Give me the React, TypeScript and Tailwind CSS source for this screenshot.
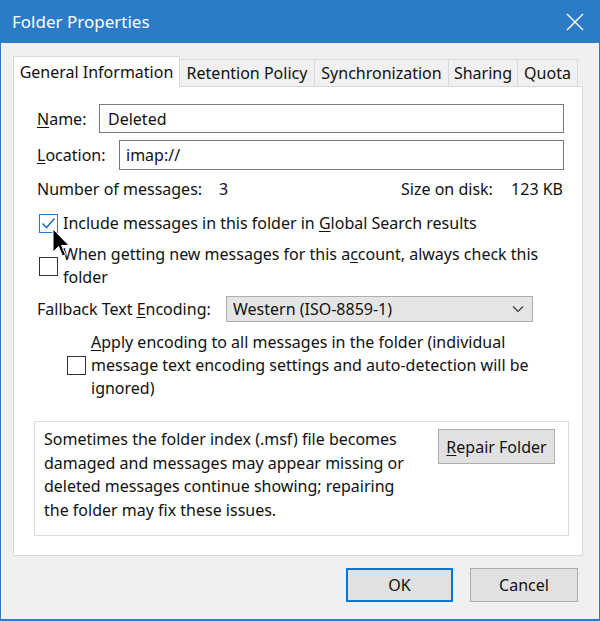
import React from "react";

function U({ children }: { children: React.ReactNode }) {
  return <span className="underline underline-offset-2">{children}</span>;
}

function Check({ checked }: { checked?: boolean }) {
  return (
    <div
      className={
        "w-[19px] h-[19px] shrink-0 border bg-white flex items-center justify-center " +
        (checked ? "border-[#2b7bc6]" : "border-[#333333]")
      }
    >
      {checked && (
        <svg width="15" height="13" viewBox="0 0 15 13">
          <path d="M1.5 6.5 L5.5 10.5 L13.5 1.5" fill="none" stroke="#2b6fb6" strokeWidth="1.6" />
        </svg>
      )}
    </div>
  );
}

const tabs = [
  { label: "Retention Policy", w: "w-[135px]" },
  { label: "Synchronization", w: "w-[134px]" },
  { label: "Sharing", w: "w-[69px]" },
  { label: "Quota", w: "w-[60px]" },
];

export default function App() {
  return (
    <div
      className="w-[600px] h-[621px] bg-[#2b7bc6] flex flex-col text-[16px] text-[#111111]"
      style={{ fontFamily: '"Noto Sans", "Open Sans", sans-serif' }}
    >
      {/* Title bar */}
      <div className="h-[43px] flex items-center justify-between pl-[12px] pr-[16px] text-white">
        <span className="text-[17px]">Folder Properties</span>
        <svg width="18" height="18" viewBox="0 0 18 18">
          <path d="M1 1 L17 17 M17 1 L1 17" stroke="white" strokeWidth="1.4" />
        </svg>
      </div>

      <div className="flex-1 mx-px mb-[2px] bg-[#f0f0f0] pl-[12px] pt-[13px] relative">
        {/* Tabs */}
        <div className="flex items-end h-[30px]">
          <div className="w-[167px] h-[31px] bg-white border border-b-0 border-[#d9d9d9] flex items-center justify-center relative z-10 -mb-px">
            General Information
          </div>
          {tabs.map((t) => (
            <div
              key={t.label}
              className={t.w + " h-[27px] border border-l-0 border-b-0 border-[#d9d9d9] flex items-center justify-center"}
            >
              {t.label}
            </div>
          ))}
        </div>

        {/* Panel */}
        <div className="w-[570px] h-[470px] bg-white border border-[#d9d9d9] pl-[23px] pr-[18px] pt-[17px] relative">
          <div className="flex items-center h-[29px]">
            <span className="w-[62px]">
              <U>N</U>ame:
            </span>
            <div className="flex-1 h-[29px] border border-[#7a7a7a] flex items-center pl-[8px]">Deleted</div>
          </div>
          <div className="flex items-center h-[30px] mt-[7px]">
            <span className="w-[82px]">
              <U>L</U>ocation:
            </span>
            <div className="flex-1 h-[30px] border border-[#7a7a7a] flex items-center pl-[6px]">imap://</div>
          </div>
          <div className="flex items-center justify-between mt-[8px] h-[22px]">
            <div className="flex">
              <span className="w-[182px]">Number of messages:</span>
              <span>3</span>
            </div>
            <div className="flex pr-[1px]">
              <span className="w-[110px]">Size on disk:</span>
              <span>123 KB</span>
            </div>
          </div>

          <div className="flex items-center gap-[5px] mt-[12px] pl-[2px] h-[22px]">
            <Check checked />
            <span>
              Include messages in this folder in <U>G</U>lobal Search results
            </span>
          </div>

          <div className="flex items-center gap-[5px] mt-[9px] pl-[2px]">
            <Check />
            <span className="leading-[23px]">
              When getting new messages for this a<U>c</U>count, always check this
              <br />
              folder
            </span>
          </div>

          <div className="flex items-center mt-[7px] h-[26px]">
            <span className="w-[189px]">
              Fallback Text <U>E</U>ncoding:
            </span>
            <div className="w-[307px] h-[26px] bg-[#e5e5e5] border border-[#adadad] flex items-center justify-between pl-[6px] pr-[8px]">
              <span>Western (ISO-8859-1)</span>
              <svg width="12" height="8" viewBox="0 0 12 8">
                <path d="M1 1.5 L6 6.5 L11 1.5" fill="none" stroke="#333" strokeWidth="1.1" />
              </svg>
            </div>
          </div>

          <div className="flex items-center gap-[5px] mt-[9px] pl-[30px]">
            <Check />
            <span className="leading-[23px]">
              <U>A</U>pply encoding to all messages in the folder (individual
              <br />
              message text encoding settings and auto-detection will be
              <br />
              ignored)
            </span>
          </div>

          <div className="mt-[21px] -ml-[3px] w-[535px] h-[115px] border border-[#dcdcdc] flex justify-between pl-[9px] pr-[13px] pt-[6px]">
            <p className="leading-[23.5px]">
              Sometimes the folder index (.msf) file becomes
              <br />
              damaged and messages may appear missing or
              <br />
              deleted messages continue showing; repairing
              <br />
              the folder may fix these issues.
            </p>
            <div className="w-[117px] h-[35px] mt-[1px] bg-[#e1e1e1] border border-[#adadad] flex items-center justify-center">
              <span>
                <U>R</U>epair Folder
              </span>
            </div>
          </div>
        </div>

        {/* Buttons */}
        <div className="flex justify-end gap-[17px] pr-[21px] mt-[12px]">
          <div className="w-[107px] h-[34px] bg-[#e1e1e1] border-2 border-[#0078d7] flex items-center justify-center">
            OK
          </div>
          <div className="w-[108px] h-[34px] bg-[#e1e1e1] border border-[#adadad] flex items-center justify-center">
            Cancel
          </div>
        </div>

        {/* Mouse cursor */}
        <svg className="absolute left-[51px] top-[185px]" width="18" height="30" viewBox="0 0 18 30">
          <path d="M1 1 L1 24 L6.5 18.5 L10.5 28 L13.5 26.7 L9.6 17.5 L17 17.5 Z" fill="black" stroke="white" strokeWidth="1" />
        </svg>
      </div>
    </div>
  );
}
